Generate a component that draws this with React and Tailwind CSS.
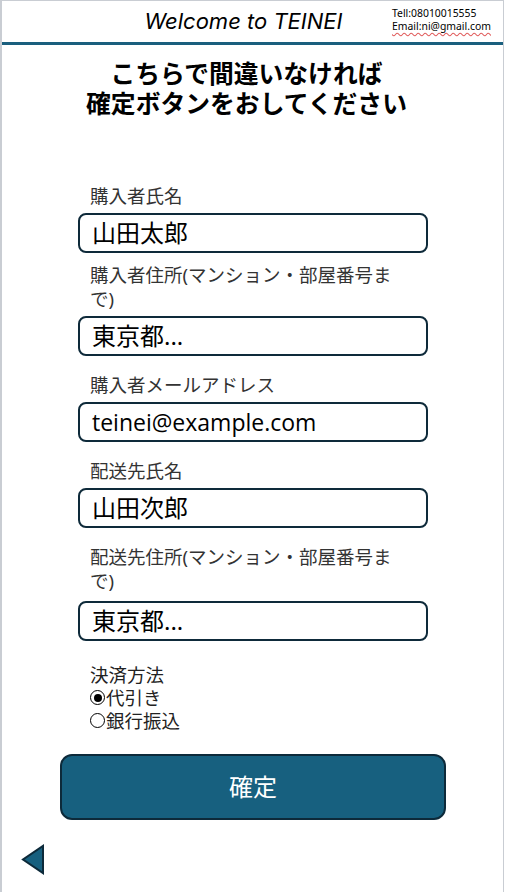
import React from "react";

const JP = { fontFamily: '"Noto Sans", "Noto Sans CJK JP", sans-serif' };

function Field({ label, value, className = "", gap = "mt-[5px]" }) {
  return (
    <div className={className}>
      <div className="pl-[12px] pr-[34px] text-[18.5px] leading-[24px] text-[#333]">{label}</div>
      <div
        className={`${gap} h-[40px] rounded-[8px] border-2 border-[#0e2a3a] bg-white flex items-center pl-[12px] text-[24px] text-black`}
      >
        {value}
      </div>
    </div>
  );
}

function Radio({ checked }) {
  return (
    <span className="inline-flex w-[15px] h-[15px] rounded-full border-[1.5px] border-black items-center justify-center mr-[1px]">
      {checked && <span className="w-[8px] h-[8px] rounded-full bg-black" />}
    </span>
  );
}

export default function App() {
  return (
    <div className="w-[508px] h-[892px] bg-white overflow-hidden" style={JP}>
      <div className="w-[504px] h-[892px] border-l-2 border-t border-r border-[#c9cdd3] flex flex-col">
        {/* header */}
        <div className="relative h-[41px] flex items-center justify-center pr-[18px]">
          <span
            className="italic text-[22px] text-black"
            style={{ fontFamily: 'Inter, sans-serif' }}
          >
            Welcome to TEINEI
          </span>
          <div className="absolute left-[390px] top-[6px] text-[10.4px] leading-[13px] text-black">
            <div>Tell:08010015555</div>
            <div className="underline decoration-wavy decoration-[#e05a5a] underline-offset-2">Email:ni@gmail.com</div>
          </div>
        </div>
        <div className="h-[3px] bg-[#1a5f7e]" />

        <h1 className="mt-[13px] flex flex-col items-center font-bold text-[24.8px] text-black pr-[12px]">
          <span className="block h-[30px] leading-[30px]">こちらで間違いなければ</span>
          <span className="block h-[30px] leading-[30px]">確定ボタンをおしてください</span>
        </h1>

        <div className="mt-[66px] pl-[76px] pr-[75px]">
          <Field label="購入者氏名" value="山田太郎" />
          <Field className="mt-[10px]" label="購入者住所(マンション・部屋番号まで)" value="東京都..." />
          <Field
            className="mt-[17px]"
            label="購入者メールアドレス"
            value={<span style={{ fontFamily: '"Open Sans", sans-serif' }} className="text-[23px]">teinei@example.com</span>}
          />
          <Field className="mt-[17px]" label="配送先氏名" value="山田次郎" />
          <Field className="mt-[17px]" gap="mt-[8px]" label="配送先住所(マンション・部屋番号まで)" value="東京都..." />

          <div className="mt-[22px] pl-[12px] text-[18.5px] leading-[23px] text-[#222]">
            <div>決済方法</div>
            <div className="flex items-center">
              <Radio checked />
              代引き
            </div>
            <div className="flex items-center">
              <Radio />
              銀行振込
            </div>
          </div>
        </div>

        <div className="mt-[22px] pl-[58px] pr-[57px]">
          <button className="w-full h-[66px] rounded-[12px] border-2 border-[#0d2a3a] bg-[#17607f] text-white text-[24px]">
            確定
          </button>
        </div>

        <div className="mt-[24px] pl-[18px]">
          <svg width="26" height="32" viewBox="0 0 26 32">
            <polygon points="23,2 23,29 3,15.5" fill="#17607f" stroke="#0d2a3a" strokeWidth="2" strokeLinejoin="miter" />
          </svg>
        </div>
      </div>
    </div>
  );
}
